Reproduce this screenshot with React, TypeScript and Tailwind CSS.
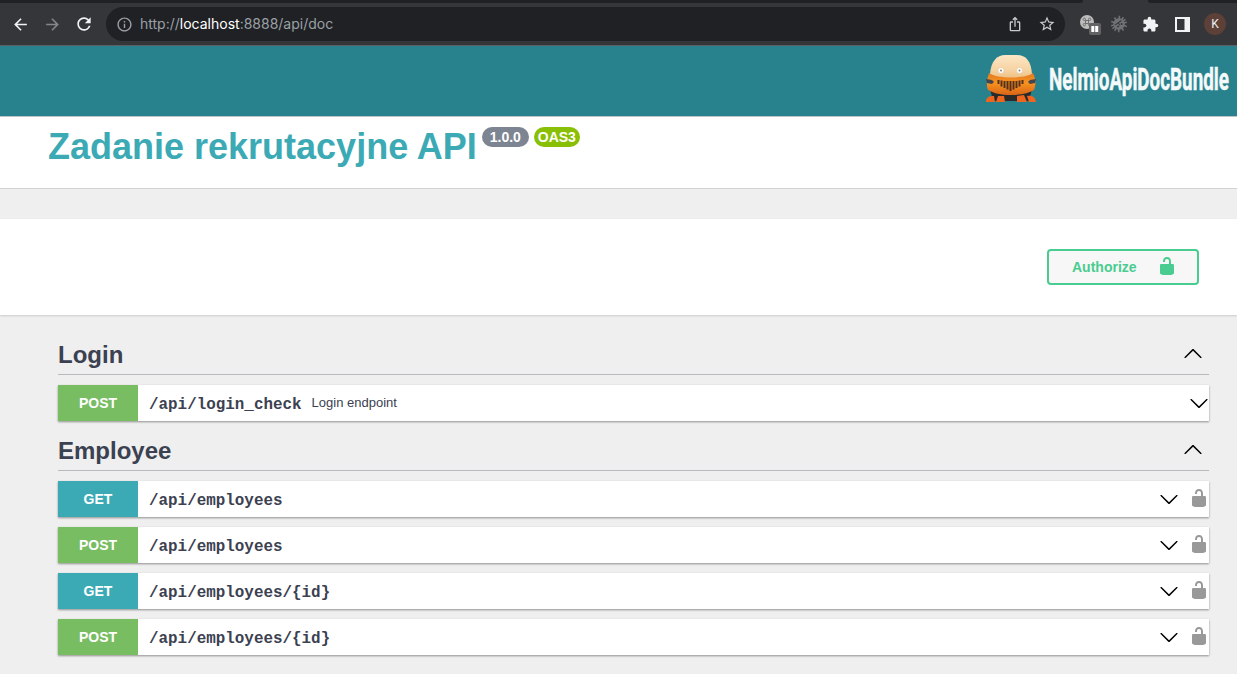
import { MdArrowBack, MdArrowForward, MdRefresh, MdInfoOutline, MdIosShare, MdStarBorder, MdExtension } from "react-icons/md";

const LOCK =
  "M15.8 8H14V5.6C14 2.703 12.665 1 10 1 7.334 1 6 2.703 6 5.6V6h2v-.801C8 3.754 8.797 3 10 3c1.203 0 2 .754 2 2.199V8H4c-.553 0-1 .646-1 1.199V17c0 .549.428 1.139.951 1.307l1.197.387C5.672 18.861 6.55 19 7.1 19h5.8c.549 0 1.428-.139 1.951-.307l1.196-.387c.524-.167.953-.757.953-1.306V9.199C17 8.646 16.352 8 15.8 8z";
const UP =
  "M 17.418 14.908 C 17.69 15.176 18.127 15.176 18.397 14.908 C 18.667 14.64 18.668 14.207 18.397 13.939 L 10.489 6.109 C 10.219 5.841 9.782 5.841 9.51 6.109 L 1.602 13.939 C 1.332 14.207 1.332 14.64 1.602 14.908 C 1.873 15.176 2.311 15.176 2.581 14.908 L 10 7.767 L 17.418 14.908 Z";

function Unlocked({ className = "" }: { className?: string }) {
  return (
    <svg viewBox="0 0 20 20" className={`h-5 w-5 shrink-0 fill-current ${className}`}>
      <path d={LOCK} />
    </svg>
  );
}

function Arrow({ down = false }: { down?: boolean }) {
  return (
    <svg viewBox="0 0 20 20" className={`h-5 w-5 shrink-0 fill-black ${down ? "rotate-180" : ""}`}>
      <path d={UP} />
    </svg>
  );
}

function TabStrip() {
  return (
    <div className="flex h-[3px] bg-[#35363a]">
      <div className="w-[1083px] rounded-br-[3px] bg-[#202124]" />
      <div className="w-[65px]" />
      <div className="flex-1 rounded-bl-[3px] bg-[#202124]" />
    </div>
  );
}

function Toolbar() {
  return (
    <div className="flex h-[42px] items-center bg-[#35363a] pl-[11px]">
      <MdArrowBack className="h-[19px] w-[19px] text-[#f1f3f4]" />
      <MdArrowForward className="ml-[13px] h-[19px] w-[19px] text-[#85868a]" />
      <MdRefresh className="ml-[12px] h-5 w-5 text-[#f1f3f4]" />
      <div className="ml-3 flex h-[34px] w-[959px] items-center rounded-full bg-[#202124] pl-[10px] pr-[9px]">
        <MdInfoOutline className="h-[17px] w-[17px] text-[#9aa0a6]" />
        <div className="ml-[7px] font-[Inter] text-[14px] leading-5 text-[#9aa0a6]">
          http://<span className="text-white">localhost</span>:8888/api/doc
        </div>
        <MdIosShare className="ml-auto h-4 w-4 text-[#c8cacd]" />
        <MdStarBorder className="ml-[15px] h-[18px] w-[18px] text-[#c8cacd]" />
      </div>
      <svg viewBox="0 0 22 22" className="ml-[14px] h-[22px] w-[22px]">
        <circle cx="8" cy="9" r="7" fill="#bdbdbd" />
        <path
          d="M6.500 7.500h3v3h-3zM6.500 7.500H5.400a1.200 1.200 0 1 1 1.100-1.200zM9.500 7.500V6.300a1.200 1.200 0 1 1 1.100 1.200zM9.500 10.500h1.100a1.200 1.200 0 1 1-1.100 1.200zM6.500 10.500v1.200a1.200 1.200 0 1 1-1.100-1.200z"
          fill="none"
          stroke="#696969"
          strokeWidth=".9"
        />
        <rect x="10" y="10" width="12" height="12" rx="2" fill="#626365" />
        <path d="M12.300 13h3v6h-3zM16.200 13h3v6h-3z" fill="#fff" />
      </svg>
      <svg viewBox="0 0 18 18" className="ml-[9px] h-[18px] w-[18px]">
        <g transform="rotate(-35 9 9)">
          <path
            d="M9 1v16M1.500 6l15 6M1.500 12l15-6M4 2.500l10 13M14 2.500l-10 13M1 9h16"
            stroke="#707173"
            strokeWidth="1.600"
          />
          <circle cx="9" cy="9" r="5.800" fill="#707173" />
          <path d="M5 7.500h8M9 7.500v3" stroke="#35363a" strokeWidth="1" />
          <circle cx="6.800" cy="10.500" r="1" fill="#35363a" />
          <circle cx="11.200" cy="10.500" r="1" fill="#35363a" />
        </g>
      </svg>
      <MdExtension className="ml-[14px] h-[17px] w-[17px] text-[#f1f3f4]" />
      <svg viewBox="0 0 15 15" className="ml-4 h-[15px] w-[15px]">
        <path d="M0 0h15v15H0zM2 2v11h7.500V2z" fill="#f1f3f4" fillRule="evenodd" />
      </svg>
      <div className="ml-[14px] flex h-[22px] w-[22px] items-center justify-center rounded-full bg-[#5d4037] font-[Roboto] text-[12px] text-[#eee]">
        K
      </div>
    </div>
  );
}

function Robot() {
  return (
    <svg viewBox="0 0 50 48" className="h-12 w-[50px]">
      <defs>
        <linearGradient id="dome" x1="0" y1="0" x2="0" y2="1">
          <stop offset="0" stopColor="#fce6c6" />
          <stop offset=".6" stopColor="#f6d3a2" />
          <stop offset="1" stopColor="#ecbc80" />
        </linearGradient>
        <linearGradient id="body" x1="0" y1="0" x2="0" y2="1">
          <stop offset="0" stopColor="#e07a24" />
          <stop offset=".45" stopColor="#f8921f" />
          <stop offset="1" stopColor="#d96517" />
        </linearGradient>
      </defs>
      <path d="M4 34h42l-3 12H7z" fill="#2b2a2a" />
      <path d="M0 47c0-5 3-6 8-6l1 6zM10 47l2-6h6l1 6zM31 47v-6l7-1 3 7zM43 47l-2-6c6-1 8 1 9 6z" fill="#f0651d" />
      <path d="M4 19C5 6 11 0 19 0h12c9 0 14 6 15 19l-3 6H7z" fill="url(#dome)" />
      <path d="M3 18c8 6 36 6 44 0 3 6 3 12 1 17-5 3-13 5-23 5S7 38 2 35c-2-5-1-11 1-17z" fill="url(#body)" />
      <path d="M0 24l6 1 2 2-2 2-5-1zM50 24l-6 1-2 2 2 2 5-1z" fill="#45464b" />
      <path
        d="M12.500 25v4M15.500 25.500v6M18.500 26v7M21.500 26v8.500M24.500 26v10M27.500 26v8.500M30.500 26v7M33.500 25.500v6M36.500 25v4"
        fill="none"
        stroke="#54301a"
        strokeWidth="2"
      />
      <circle cx="15" cy="15.500" r="3" fill="#fff" stroke="#e4c59b" strokeWidth=".6" />
      <circle cx="33.500" cy="15.500" r="3" fill="#fff" stroke="#e4c59b" strokeWidth=".6" />
      <circle cx="15" cy="15.500" r="1" fill="#8c8170" />
      <circle cx="33.500" cy="15.500" r="1" fill="#8c8170" />
    </svg>
  );
}

function Brand() {
  return (
    <header className="flex h-[71px] items-start justify-end border-t border-[#5c6165] bg-[#27828d] pr-[3px] pt-[9px]">
      <Robot />
      <svg viewBox="0 0 186 48" className="ml-3 h-12 w-[186px] overflow-visible">
        <text
          x="1"
          y="35"
          fontSize="32"
          fontWeight="700"
          textLength="180"
          lengthAdjust="spacingAndGlyphs"
          strokeWidth=".5"
          className="fill-[#f4f9fa] stroke-[#f4f9fa] font-['Roboto',sans-serif]"
        >
          NelmioApiDocBundle
        </text>
      </svg>
    </header>
  );
}

function SectionHead({ title }: { title: string }) {
  return (
    <div className="flex h-[41px] w-[1151px] items-start justify-between border-b border-[#b9babe] pr-[6px]">
      <h2 className="text-[24px] font-bold leading-[41px]">{title}</h2>
      <div className="pt-[9px]">
        <Arrow />
      </div>
    </div>
  );
}

type Op = { method: "GET" | "POST"; path: string; note?: string; lock?: boolean };

function Row({ method, path, note, lock }: Op) {
  return (
    <div className="flex h-9 w-[1151px] items-center bg-white shadow-[0_1px_2px_rgba(0,0,0,0.4)]">
      <div
        className={`flex h-9 w-20 items-center justify-center text-[14px] font-bold text-white ${
          method === "GET" ? "bg-[#3caab5]" : "bg-[#78bd62]"
        }`}
      >
        {method}
      </div>
      <div className="ml-[11px] pt-[3px] font-['Liberation_Mono',monospace] text-[15.900px] font-bold leading-5">
        {path}
      </div>
      {note && <div className="ml-[10px] text-[13px]">{note}</div>}
      <div className="ml-auto flex items-center gap-[10px] pt-px">
        <Arrow down />
        {lock && <Unlocked className="-mt-1 text-[#999]" />}
      </div>
    </div>
  );
}

const employeeOps: Op[] = [
  { method: "GET", path: "/api/employees", lock: true },
  { method: "POST", path: "/api/employees", lock: true },
  { method: "GET", path: "/api/employees/{id}", lock: true },
  { method: "POST", path: "/api/employees/{id}", lock: true },
];

export default function App() {
  return (
    <div className="h-[674px] w-[1237px] overflow-hidden bg-[#efefef] font-['Liberation_Sans',Arial,sans-serif] text-[#3b4151]">
      <TabStrip />
      <Toolbar />
      <Brand />
      <div className="flex h-[73px] items-start border-y border-b-[#d3d3d3] border-t-[#bcc6c8] bg-white pl-12 pt-[9px]">
        <h1 className="text-[36px] font-bold leading-[42px] text-[#3caab5]">Zadanie rekrutacyjne API</h1>
        <div className="ml-[5px] mt-px flex gap-[5px] text-[14px] font-bold leading-[20px] text-white">
          <span className="h-5 w-[47px] rounded-full bg-[#7d8492] text-center">1.0.0</span>
          <span className="h-5 w-[46px] rounded-full bg-[#89bf04] text-center">OAS3</span>
        </div>
      </div>
      <div className="mt-[30px] flex h-24 items-start justify-end bg-white pr-[38px] pt-[30px] shadow-[0_1px_2px_rgba(0,0,0,0.15)]">
        <button className="flex h-9 w-[152px] items-center justify-between rounded border-2 border-[#49cc90] bg-[#f7f7f7] pl-[23px] pr-5 text-[14px] font-bold text-[#49cc90]">
          Authorize
          <Unlocked className="-mt-0.5" />
        </button>
      </div>
      <main className="pl-[58px] pt-[19px]">
        <SectionHead title="Login" />
        <div className="mt-[10px]">
          <Row method="POST" path="/api/login_check" note="Login endpoint" />
        </div>
        <div className="mt-[9px]">
          <SectionHead title="Employee" />
        </div>
        <div className="mt-[10px] flex flex-col gap-[10px]">
          {employeeOps.map((op) => (
            <Row key={op.method + op.path} {...op} />
          ))}
        </div>
      </main>
    </div>
  );
}
